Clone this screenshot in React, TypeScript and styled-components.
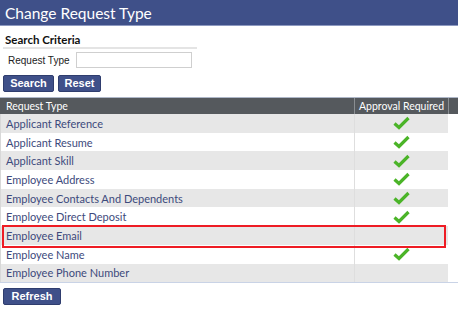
import styled, { createGlobalStyle } from "styled-components";

const GlobalStyle = createGlobalStyle`
    body {
        margin: 0;
        background: #ffffff;
        font-family: Lato, "Open Sans", sans-serif;
    }
`;

const Page = styled.div`
    width: 458px;
    height: 309px;
    overflow: hidden;
    position: relative;
`;
const TitleBar = styled.div`
    height: 26px;
    background-color: #3f5089;
    border-bottom: 1px solid #8d99c0;
    box-sizing: border-box;
    display: flex;
    align-items: center;
    padding-left: 5px;
`;
const Title = styled.h1`
    margin: 0;
    font-size: 15.5px;
    line-height: 20px;
    font-weight: 400;
    color: #ffffff;
`;
const Criteria = styled.div`
    padding: 5px 3px 0;
`;
const SectionTitle = styled.h2`
    margin: 0;
    width: 192px;
    font-size: 11.5px;
    line-height: 14px;
    font-weight: 700;
    color: #111;
    padding: 2px 0 0 2px;
    border-bottom: 2px solid #e4e4e4;
`;
const Field = styled.div`
    display: flex;
    align-items: center;
    height: 22px;
    padding-left: 5px;
`;
const Label = styled.label`
    font-family: "Liberation Sans", Arial, sans-serif;
    font-size: 10px;
    color: #222;
    width: 68px;
`;
const Input = styled.input`
    width: 116px;
    height: 16px;
    box-sizing: border-box;
    border: 1px solid #cfcfcf;
    padding: 0;
`;
const Buttons = styled.div`
    display: flex;
    gap: 4px;
    margin-top: 4px;
`;
const Button = styled.button<{ w: number }>`
    display: block;
    width: ${(p) => p.w}px;
    height: 17px;
    padding: 0;
    border: 1px solid #2f3d6e;
    border-radius: 2px;
    background-color: #3f5089;
    color: #ffffff;
    font-family: "Liberation Sans", Arial, sans-serif;
    font-size: 11px;
    line-height: 15px;
    font-weight: 700;
`;
const Grid = styled.div`
    margin-top: 5px;
    border-top: 1px solid #aeb7c8;
    border-bottom: 1px solid #c9d3e6;
`;
const HeadRow = styled.div`
    display: grid;
    grid-template-columns: 354px 94px 10px;
    height: 16px;
    background-color: #55595d;
    color: #ffffff;
    font-size: 10.5px;
    line-height: 16px;
`;
const HeadCell = styled.div<{ center?: boolean }>`
    padding-left: ${(p) => (p.center ? 0 : 6)}px;
    text-align: ${(p) => (p.center ? "center" : "left")};
    border-left: ${(p) => (p.center ? "1px solid #8a8e92" : "none")};
`;
const Body = styled.div`
    width: 448px;
    border-left: 1px solid #d8d8d8;
    box-sizing: border-box;
`;
const Row = styled.div<{ alt: boolean }>`
    display: grid;
    grid-template-columns: 353px 94px;
    height: 18.7px;
    background-color: ${(p) => (p.alt ? "#e7e7e7" : "#ffffff")};
    font-size: 11px;
    color: #3d4a7c;
    align-items: center;
`;
const Cell = styled.div`
    padding-left: 5px;
`;
const CheckCell = styled.div`
    height: 100%;
    border-left: 1px solid #dedede;
    display: flex;
    align-items: center;
    justify-content: center;
`;
const Footer = styled.div`
    padding: 5px 3px 0;
`;
const Highlight = styled.div`
    position: absolute;
    left: 2px;
    top: 225px;
    width: 444px;
    height: 23px;
    box-sizing: border-box;
    border: 2px solid #ee1c24;
    pointer-events: none;
`;

const Check = () => (
    <svg width="17" height="14" viewBox="0 0 17 14">
        <path d="M1.5 7.5 L6 11.5 L15.5 2" fill="none" stroke="#4bb428" strokeWidth="3.2" />
    </svg>
);

const rows: [string, boolean][] = [
    ["Applicant Reference", true],
    ["Applicant Resume", true],
    ["Applicant Skill", true],
    ["Employee Address", true],
    ["Employee Contacts And Dependents", true],
    ["Employee Direct Deposit", true],
    ["Employee Email", false],
    ["Employee Name", true],
    ["Employee Phone Number", false],
];

function App() {
    return (
        <>
            <GlobalStyle />
            <Page>
                <TitleBar>
                    <Title>Change Request Type</Title>
                </TitleBar>
                <Criteria>
                    <SectionTitle>Search Criteria</SectionTitle>
                    <Field>
                        <Label>Request Type</Label>
                        <Input />
                    </Field>
                    <Buttons>
                        <Button w={51}>Search</Button>
                        <Button w={43}>Reset</Button>
                    </Buttons>
                </Criteria>
                <Grid>
                    <HeadRow>
                        <HeadCell>Request Type</HeadCell>
                        <HeadCell center>Approval Required</HeadCell>
                        <HeadCell center />
                    </HeadRow>
                    <Body>
                        {rows.map(([name, approved], i) => (
                            <Row key={name} alt={i % 2 === 0}>
                                <Cell>{name}</Cell>
                                <CheckCell>{approved && <Check />}</CheckCell>
                            </Row>
                        ))}
                    </Body>
                </Grid>
                <Footer>
                    <Button w={58}>Refresh</Button>
                </Footer>
                <Highlight />
            </Page>
        </>
    );
}

export default App;
